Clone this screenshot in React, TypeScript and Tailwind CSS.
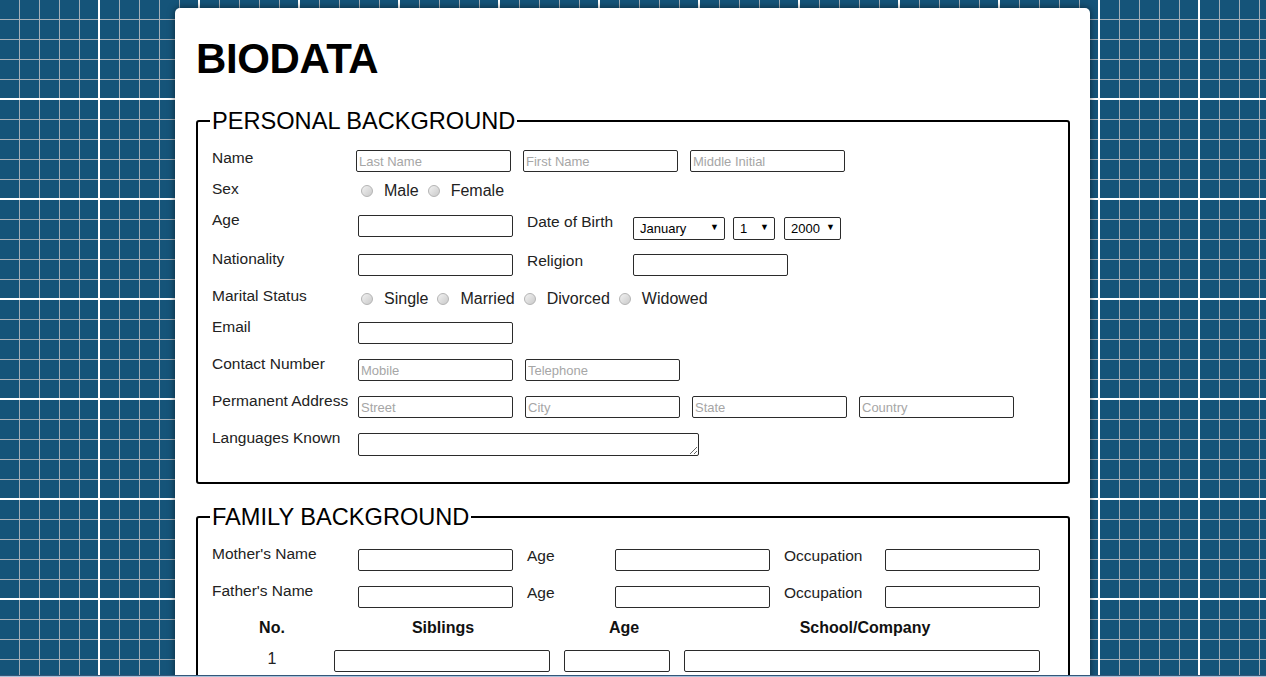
import React from 'react';

function TextInput({ placeholder, className = '' }: { placeholder?: string; className?: string }) {
  return (
    <input
      type="text"
      placeholder={placeholder}
      className={`h-[22px] shrink-0 rounded-[2px] border border-[#2b2b2b] bg-white px-[2px] text-[13px] text-black outline-none placeholder:text-[#a6a6a6] ${className}`}
    />
  );
}

function Label({ children }: { children: React.ReactNode }) {
  return <span className="w-[146px] shrink-0 text-[15.5px] leading-[18px] text-[#222]">{children}</span>;
}

function InlineLabel({ children, className = '' }: { children: React.ReactNode; className?: string }) {
  return (
    <span className={`ml-[14px] mt-[2px] shrink-0 text-[15.5px] leading-[18px] text-[#222] ${className}`}>{children}</span>
  );
}

function Radio({ label, first }: { label: string; first?: boolean }) {
  return (
    <label className={`flex items-center ${first ? '' : 'ml-[6px]'}`}>
      <span className="ml-[3px] mr-[11px] h-[12px] w-[12px] rounded-full border border-[#b4b4b4] bg-gradient-to-br from-[#f2f2f2] to-[#cacaca]" />
      <span className="text-[16px] leading-[18px] text-[#222]">{label}</span>
    </label>
  );
}

function Select({ value, className = '' }: { value: string; className?: string }) {
  return (
    <div className={`relative h-[23px] shrink-0 ${className}`}>
      <select
        defaultValue={value}
        className="h-full w-full appearance-none rounded-[2px] border border-[#2b2b2b] bg-white pl-[6px] text-[13px] leading-[21px] text-black outline-none"
      >
        <option>{value}</option>
      </select>
      <span className="pointer-events-none absolute right-[6px] top-[5px] text-[9px] leading-[12px] text-black">▼</span>
    </div>
  );
}

export default function App() {
  return (
    <div className="flex h-[677px] flex-col overflow-hidden font-['Liberation_Sans',Arial,sans-serif]">
      <div className="flex-1 overflow-hidden bg-[#155479] bg-[linear-gradient(#fff_2px,transparent_2px),linear-gradient(90deg,#fff_2px,transparent_2px),linear-gradient(#a4afb8_1px,transparent_1px),linear-gradient(90deg,#a4afb8_1px,transparent_1px)] bg-[size:100px_100px,100px_100px,20px_20px,20px_20px] bg-[position:98px_98px,98px_98px,19px_19px,19px_19px] pt-2">
        <div className="ml-[175px] min-h-[700px] w-[915px] rounded-t-[5px] bg-white pl-[21px] pr-[20px] pt-[30px] shadow-[0_0_7px_rgba(0,0,0,0.55)]">
          <h1 className="text-[42px] font-bold leading-none tracking-[-0.4px] text-black">BIODATA</h1>

          {/* Personal */}
          <fieldset className="mt-[27px] rounded-[3px] border-2 border-black px-[14px] pb-[26px] pt-[14px]">
            <legend className="-ml-[2px] px-[2px] text-[23.6px] leading-[28px] text-black">PERSONAL BACKGROUND</legend>

            <div className="flex h-[31px] items-start">
              <Label>Name</Label>
              <TextInput placeholder="Last Name" className="-ml-[2px] mt-[1px] w-[155px]" />
              <TextInput placeholder="First Name" className="ml-[12px] mt-[1px] w-[155px]" />
              <TextInput placeholder="Middle Initial" className="ml-[12px] mt-[1px] w-[155px]" />
            </div>

            <div className="flex h-[31px] items-start">
              <Label>Sex</Label>
              <div className="mt-[2px] flex h-[18px] items-center">
                <Radio label="Male" first />
                <Radio label="Female" />
              </div>
            </div>

            <div className="flex h-[39px] items-start">
              <Label>Age</Label>
              <TextInput className="mt-[4px] w-[155px]" />
              <InlineLabel className="w-[106px]">Date of Birth</InlineLabel>
              <Select value="January" className="mt-[5px] w-[92px]" />
              <Select value="1" className="ml-[8px] mt-[5px] w-[42px]" />
              <Select value="2000" className="ml-[9px] mt-[5px] w-[57px]" />
            </div>

            <div className="flex h-[37px] items-start">
              <Label>Nationality</Label>
              <TextInput className="mt-[4px] w-[155px]" />
              <InlineLabel className="w-[106px]">Religion</InlineLabel>
              <TextInput className="mt-[4px] w-[155px]" />
            </div>

            <div className="flex h-[31px] items-start">
              <Label>Marital Status</Label>
              <div className="mt-[3px] flex h-[18px] items-center">
                <Radio label="Single" first />
                <Radio label="Married" />
                <Radio label="Divorced" />
                <Radio label="Widowed" />
              </div>
            </div>

            <div className="flex h-[37px] items-start">
              <Label>Email</Label>
              <TextInput className="mt-[4px] w-[155px]" />
            </div>

            <div className="flex h-[37px] items-start">
              <Label>Contact Number</Label>
              <TextInput placeholder="Mobile" className="mt-[4px] w-[155px]" />
              <TextInput placeholder="Telephone" className="ml-[12px] mt-[4px] w-[155px]" />
            </div>

            <div className="flex h-[37px] items-start">
              <Label>Permanent Address</Label>
              <TextInput placeholder="Street" className="mt-[4px] w-[155px]" />
              <TextInput placeholder="City" className="ml-[12px] mt-[4px] w-[155px]" />
              <TextInput placeholder="State" className="ml-[12px] mt-[4px] w-[155px]" />
              <TextInput placeholder="Country" className="ml-[12px] mt-[4px] w-[155px]" />
            </div>

            <div className="flex items-start">
              <Label>Languages Known</Label>
              <textarea
                rows={1}
                className="mt-[4px] block h-[23px] w-[341px] rounded-[2px] border border-[#2b2b2b] bg-white px-[2px] text-[13px] outline-none"
              />
            </div>
          </fieldset>

          {/* Family */}
          <fieldset className="mt-[19px] rounded-[3px] border-2 border-black px-[14px] pb-[26px] pt-[14px]">
            <legend className="-ml-[2px] px-[2px] text-[23.6px] leading-[28px] text-black">FAMILY BACKGROUND</legend>

            <div className="flex h-[37px] items-start">
              <Label>Mother's Name</Label>
              <TextInput className="mt-[4px] w-[155px]" />
              <InlineLabel className="w-[88px]">Age</InlineLabel>
              <TextInput className="mt-[4px] w-[155px]" />
              <InlineLabel className="w-[101px]">Occupation</InlineLabel>
              <TextInput className="mt-[4px] w-[155px]" />
            </div>

            <div className="flex h-[37px] items-start">
              <Label>Father's Name</Label>
              <TextInput className="mt-[4px] w-[155px]" />
              <InlineLabel className="w-[88px]">Age</InlineLabel>
              <TextInput className="mt-[4px] w-[155px]" />
              <InlineLabel className="w-[101px]">Occupation</InlineLabel>
              <TextInput className="mt-[4px] w-[155px]" />
            </div>

            <div className="flex h-[29px] items-start text-[16px] font-bold leading-[18px] text-[#111]">
              <span className="w-[120px] text-center">No.</span>
              <span className="w-[222px] text-center">Siblings</span>
              <span className="w-[140px] text-center">Age</span>
              <span className="w-[342px] text-center">School/Company</span>
            </div>

            <div className="flex items-start">
              <span className="mt-[2px] w-[120px] text-center text-[16px] leading-[18px] text-[#222]">1</span>
              <TextInput className="ml-[2px] mt-[2px] w-[216px]" />
              <TextInput className="ml-[14px] mt-[2px] w-[106px]" />
              <TextInput className="ml-[14px] mt-[2px] w-[356px]" />
            </div>
          </fieldset>
        </div>
      </div>
      <div className="h-[2px] shrink-0 border-t border-[#34577a] bg-[#a9c1d9]" />
    </div>
  );
}
